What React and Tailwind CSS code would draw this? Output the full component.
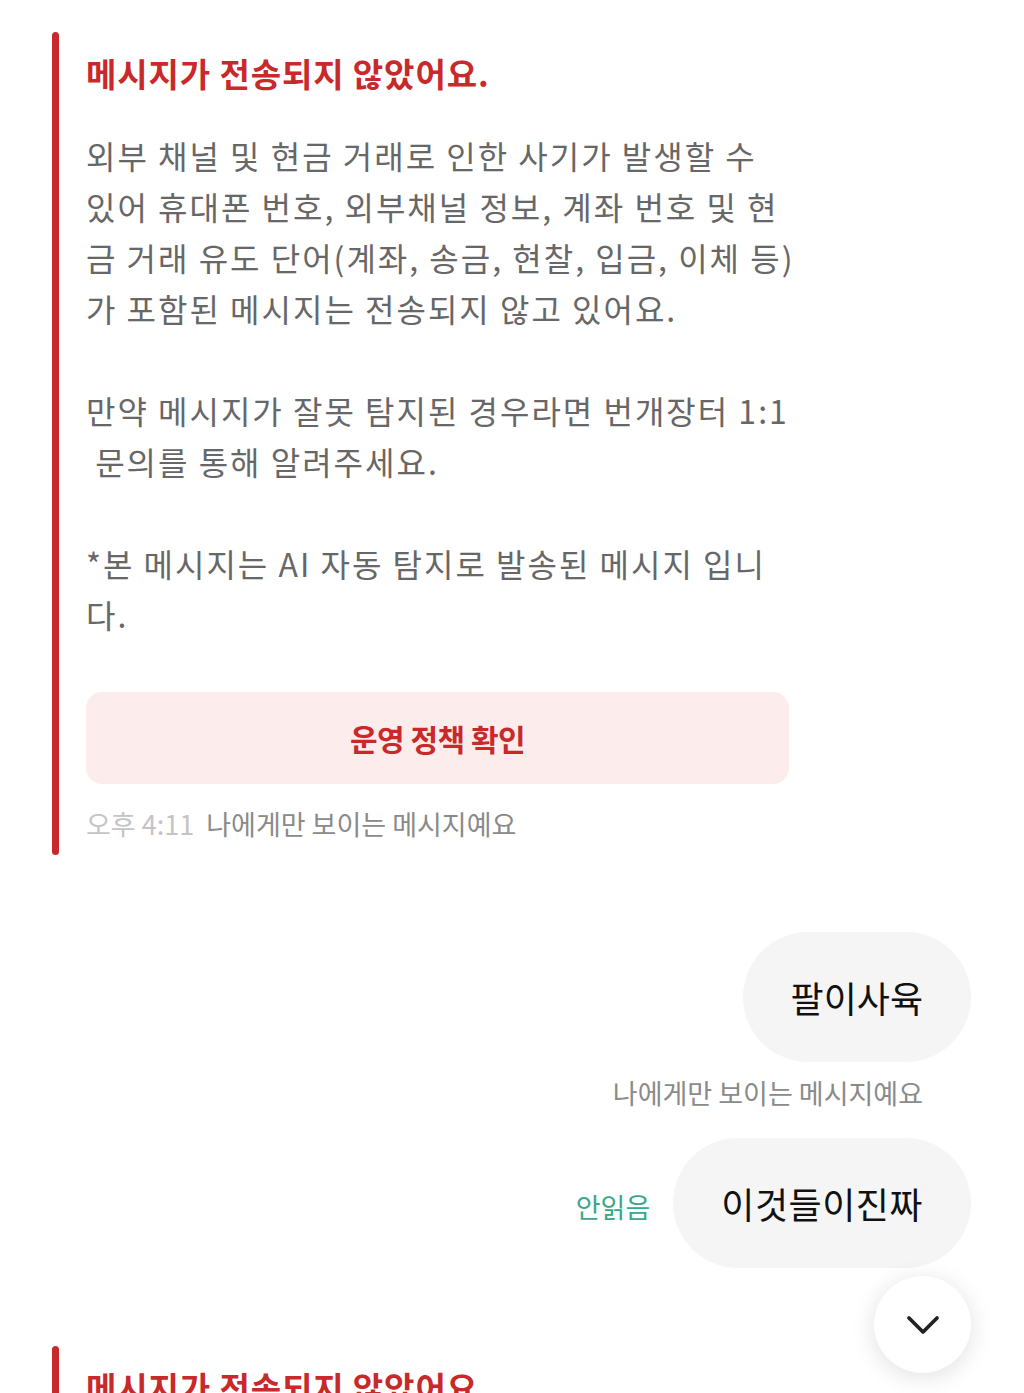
import { ChevronDown } from "lucide-react";

const font = { fontFamily: '"Noto Sans CJK KR", "Noto Sans", sans-serif' };

const bodyLines = [
  ["외부 채널 및 현금 거래로 인한 사기가 발생할 수", "있어 휴대폰 번호, 외부채널 정보, 계좌 번호 및 현", "금 거래 유도 단어(계좌, 송금, 현찰, 입금, 이체 등)", "가 포함된 메시지는 전송되지 않고 있어요."],
  ["만약 메시지가 잘못 탐지된 경우라면 번개장터 1:1", "\u00a0문의를 통해 알려주세요."],
  ["*본 메시지는 AI 자동 탐지로 발송된 메시지 입니", "다."],
];

const BlockedNotice = ({ full = true }) => {
  return (
    <section className="flex pl-[52px] pr-[235px]">
      <div className="w-[7px] shrink-0 rounded-full bg-[#c8292b]" />
      <div className="ml-[27px] min-w-0 flex-1 pt-[16px] pb-[9px]">
        <h2 className="whitespace-nowrap text-[33px] font-bold leading-[50px] tracking-[0.9px] text-[#c8292b]">
          메시지가 전송되지 않았어요.
        </h2>
        {full && (
          <>
            <div className="mt-[32px] flex flex-col gap-[51px] text-[32px] leading-[51px] tracking-[2px] text-[#676767]">
              {bodyLines.map((para, i) => (
                <p key={i}>
                  {para.map((line, j) => (
                    <span key={j} className="block whitespace-pre">{line}</span>
                  ))}
                </p>
              ))}
            </div>
            <button className="mt-[52px] flex h-[92px] w-full items-center justify-center rounded-[16px] bg-[#fcecec] text-[30px] font-bold tracking-[-0.5px] text-[#c8292b]">
              운영 정책 확인
            </button>
            <div className="mt-[18px] flex items-center gap-[12px] text-[27px] leading-[44px]">
              <span className="text-[#c4c4c4]">오후 4:11</span>
              <span className="text-[#8a8a8a]">나에게만 보이는 메시지예요</span>
            </div>
          </>
        )}
      </div>
    </section>
  );
};

export default function App() {
  return (
    <div className="relative h-[1393px] w-[1024px] overflow-hidden bg-white" style={font}>
      <div className="pt-[32px]">
        <BlockedNotice />
      </div>

      <div className="mt-[77px] flex flex-col items-end pr-[53px]">
        <div className="flex h-[130px] items-center rounded-full bg-[#f5f5f5] px-[48px] text-[36px] text-[#111]">
          팔이사육
        </div>
        <div className="mr-[48px] mt-[11px] text-[27px] leading-[40px] text-[#8a8a8a]">
          나에게만 보이는 메시지예요
        </div>
        <div className="mt-[25px] flex items-center gap-[23px]">
          <span className="pt-[8px] text-[27px] text-[#3aa68a]">안읽음</span>
          <div className="flex h-[130px] items-center rounded-full bg-[#f5f5f5] px-[48px] text-[36px] tracking-[0.5px] text-[#111]">
            이것들이진짜
          </div>
        </div>
      </div>

      <div className="mt-[78px] h-[60px] overflow-visible">
        <BlockedNotice full={false} />
      </div>

      <button className="absolute left-[874px] top-[1276px] flex h-[97px] w-[97px] items-center justify-center rounded-full bg-white shadow-[0_4px_24px_rgba(0,0,0,0.12)]">
        <ChevronDown size={56} strokeWidth={1.6} className="text-[#222]" />
      </button>
    </div>
  );
}
